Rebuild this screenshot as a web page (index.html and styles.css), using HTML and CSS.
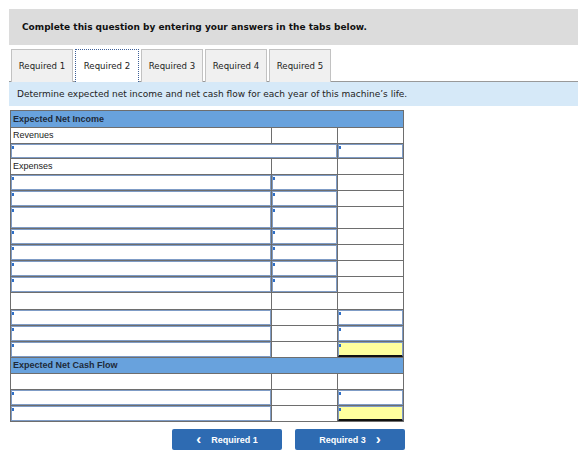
FILE: index.html
```html
<!DOCTYPE html>
<html>
<head>
<meta charset="utf-8">
<link rel="stylesheet" href="styles.css">
</head>
<body>
<div class="page">
  <div class="banner">Complete this question by entering your answers in the tabs below.</div>
  <div class="tabs">
    <div class="tab">Required 1</div>
    <div class="tab active">Required 2</div>
    <div class="tab">Required 3</div>
    <div class="tab">Required 4</div>
    <div class="tab">Required 5</div>
  </div>
  <div class="instr">Determine expected net income and net cash flow for each year of this machine’s life.</div>
  <table class="grid">
    <colgroup><col class="c1"><col class="c2"><col class="c3"></colgroup>
    <tr class="hdr"><td colspan="3">Expected Net Income</td></tr>
    <tr class="r16"><td class="lbl">Revenues</td><td></td><td></td></tr>
    <tr class="r15"><td colspan="2" class="in"><div class="inp h13"></div></td><td class="in"><div class="inp h13"></div></td></tr>
    <tr class="r16"><td class="lbl">Expenses</td><td></td><td></td></tr>
    <tr><td class="in"><div class="inp"></div></td><td class="in"><div class="inp"></div></td><td></td></tr>
    <tr><td class="in"><div class="inp"></div></td><td class="in"><div class="inp"></div></td><td></td></tr>
    <tr><td class="in"><div class="inp tall"></div></td><td class="in"><div class="inp tall"></div></td><td></td></tr>
    <tr><td class="in"><div class="inp"></div></td><td class="in"><div class="inp"></div></td><td></td></tr>
    <tr><td class="in"><div class="inp"></div></td><td class="in"><div class="inp"></div></td><td></td></tr>
    <tr><td class="in"><div class="inp"></div></td><td class="in"><div class="inp"></div></td><td></td></tr>
    <tr><td class="in"><div class="inp"></div></td><td class="in"><div class="inp"></div></td><td></td></tr>
    <tr class="r17"><td></td><td></td><td></td></tr>
    <tr><td class="in"><div class="inp"></div></td><td></td><td class="in over"><div class="inp"></div></td></tr>
    <tr><td class="in"><div class="inp"></div></td><td></td><td class="in"><div class="inp"></div></td></tr>
    <tr><td class="in"><div class="inp"></div></td><td></td><td class="in total"><div class="inp yel"></div></td></tr>
    <tr class="hdr h16"><td colspan="3">Expected Net Cash Flow</td></tr>
    <tr class="r16"><td></td><td></td><td></td></tr>
    <tr><td class="in"><div class="inp"></div></td><td></td><td class="in"><div class="inp"></div></td></tr>
    <tr><td class="in"><div class="inp"></div></td><td></td><td class="in total"><div class="inp yel"></div></td></tr>
  </table>
  <div class="nav">
    <button class="btn"><span class="chev">&lsaquo;</span>Required 1</button>
    <button class="btn">Required 3<span class="chev r">&rsaquo;</span></button>
  </div>
</div>
</body>
</html>
```
FILE: styles.css
```css
html, body { margin: 0; padding: 0; background: #fff; }
.page { padding: 9px 10px 0 9px; }
.banner {
  background: #dcdcdc;
  height: 36px;
  display: flex;
  align-items: center;
  padding-left: 13px;
  font-family: "DejaVu Sans", Verdana, sans-serif;
  font-weight: bold;
  font-size: 9px;
  color: #111;
}
.tabs {
  display: flex;
  gap: 2px;
  margin-top: 4px;
  padding-left: 2px;
  border-bottom: 1px solid #999;
  height: 32px;
}
.tab {
  box-sizing: border-box;
  height: 33px;
  width: 62px;
  border: 1px solid #c2c2c2;
  border-bottom: none;
  background: #f0f0f0;
  display: flex;
  align-items: center;
  justify-content: center;
  font-family: "DejaVu Sans", Verdana, sans-serif;
  font-size: 8.6px;
  color: #222;
}
.tab.active {
  background: #fff;
  border: 1px dotted #3b5e96;
  border-bottom: none;
  width: 64px;
  position: relative;
  z-index: 1;
}
.instr {
  background: #d6e9f8;
  height: 24px;
  display: flex;
  align-items: center;
  padding-left: 8px;
  font-family: "DejaVu Sans", Verdana, sans-serif;
  font-size: 9px;
  color: #222;
}
.grid {
  margin-top: 4px;
  margin-left: 1px;
  border-collapse: collapse;
  width: 394px;
  table-layout: fixed;
  font-family: "Liberation Sans", Arial, sans-serif;
  font-size: 9px;
  color: #222;
}
.c1 { width: 261px; }
.c2 { width: 66px; }
.c3 { width: 66px; }
.grid td {
  border: 1px solid #6e6e6e;
  padding: 0;
  height: 15px;
  line-height: 15px;
}
.grid tr.hdr td {
  background: #68a2dd;
  font-weight: bold;
  height: 16px;
  padding-left: 2px;
  color: #1e2a3a;
}
.grid tr.hdr.h16 td { height: 15px; }
.grid tr.r17 td { height: 16px; }
.grid tr.r15 td { height: 14px; line-height: 14px; }
.grid td.lbl { padding-left: 2px; }
.grid td.in { vertical-align: top; }
.inp {
  position: relative;
  box-sizing: border-box;
  height: 15px;
  border: 1px solid #7f9cc6;
  background: #fff;
}
.inp.h13 { height: 14px; }
.inp.tall { height: 21px; }
.inp::before {
  content: "";
  position: absolute;
  left: 0;
  top: 1px;
  width: 2px;
  height: 3px;
  background: #2f6fc6;
}
.inp.yel { background: #ffff9e; border-bottom: 2px solid #111; }
.grid td.over { border-top: 1px solid #000; }
.nav {
  width: 396px;
  display: flex;
  justify-content: flex-end;
  gap: 13px;
  margin-top: 7px;
}
.btn {
  width: 110px;
  height: 21px;
  border: none;
  border-radius: 2px;
  background: #2e6bb2;
  color: #fff;
  font-family: "Liberation Sans", Arial, sans-serif;
  font-weight: bold;
  font-size: 9px;
  display: flex;
  align-items: center;
  justify-content: center;
  padding: 0;
}
.chev { font-size: 15px; margin-right: 10px; line-height: 1; position: relative; top: -1px; }
.chev.r { margin-right: 0; margin-left: 10px; }
```
